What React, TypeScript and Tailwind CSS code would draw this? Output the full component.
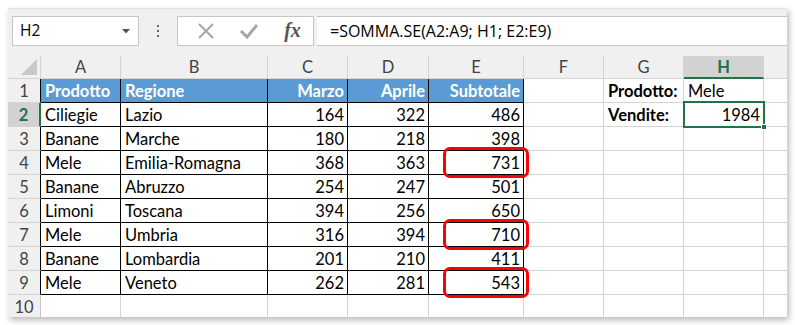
import React from "react";

const cols = ["A", "B", "C", "D", "E", "F", "G", "H"];
const data: (string | number)[][] = [
  ["Ciliegie", "Lazio", 164, 322, 486],
  ["Banane", "Marche", 180, 218, 398],
  ["Mele", "Emilia-Romagna", 368, 363, 731],
  ["Banane", "Abruzzo", 254, 247, 501],
  ["Limoni", "Toscana", 394, 256, 650],
  ["Mele", "Umbria", 316, 394, 710],
  ["Banane", "Lombardia", 201, 210, 411],
  ["Mele", "Veneto", 262, 281, 543],
];
const headers = ["Prodotto", "Regione", "Marzo", "Aprile", "Subtotale"];
const redRows = [4, 7, 9];

function Cell({
  children,
  black,
  blue,
  right,
  bold,
  extra,
  rowH,
}: {
  children?: React.ReactNode;
  black?: boolean;
  blue?: boolean;
  right?: boolean;
  bold?: boolean;
  extra?: React.ReactNode;
  rowH: string;
}) {
  return (
    <div
      className={`relative flex items-center ${rowH} border-r border-b ${
        black ? "border-black" : "border-[#d4d4d4]"
      } ${blue ? "bg-[#5b9bd5] text-white font-bold" : "bg-white text-black"} ${
        bold ? "font-bold" : ""
      } ${right ? "justify-end pr-[3px]" : "justify-start pl-[4px]"} whitespace-nowrap`}
    >
      <span className="leading-none pt-[1px]">{children}</span>
      {extra}
    </div>
  );
}

export default function App() {
  const rows: React.ReactNode[] = [];
  for (let r = 1; r <= 10; r++) {
    const rowH = "h-[24px]";
    const inTable = r <= 9;
    const selRow = r === 2;
    rows.push(
      <div
        key={`rh${r}`}
        className={`flex items-center justify-center ${rowH} border-b border-[#d4d4d4] ${
          selRow
            ? "bg-[#d2d2d2] text-[#217346] font-bold border-r-2 border-r-[#217346]"
            : inTable
            ? "bg-[#f0f0f0] text-[#444] border-r border-r-black"
            : "bg-[#f0f0f0] text-[#444] border-r border-r-[#c6c6c6]"
        }`}
      >
        <span className="leading-none pt-[1px]">{r}</span>
      </div>
    );
    for (let c = 0; c < 8; c++) {
      let content: React.ReactNode = null;
      let black = false;
      let blue = false;
      let right = false;
      let bold = false;
      let extra: React.ReactNode = null;
      if (c < 5 && inTable) {
        black = true;
        if (r === 1) {
          blue = true;
          content = headers[c];
          right = c >= 2;
        } else {
          const v = data[r - 2][c];
          content = v;
          right = typeof v === "number";
        }
        if (c === 4 && redRows.includes(r)) {
          extra = (
            <div className="absolute z-10 left-[14px] right-[-6px] top-[-4px] bottom-[-4px] border-[3px] border-[#ff0000] rounded-[7px] pointer-events-none" />
          );
        }
      }
      if (c === 6 && r === 1) {
        content = "Prodotto:";
        bold = true;
      }
      if (c === 6 && r === 2) {
        content = "Vendite:";
        bold = true;
      }
      if (c === 7 && r === 1) {
        content = "Mele";
      }
      if (c === 7 && r === 2) {
        content = 1984;
        right = true;
        extra = (
          <>
            <div className="absolute z-10 left-[-1px] right-[-2px] top-[-2px] bottom-[-2px] border-2 border-[#217346] pointer-events-none" />
            <div className="absolute z-10 right-[-4px] bottom-[-4px] w-[6px] h-[6px] bg-[#217346] border border-white pointer-events-none" />
          </>
        );
      }
      rows.push(
        <Cell
          key={`c${r}-${c}`}
          black={black}
          blue={blue}
          right={right}
          bold={bold}
          extra={extra}
          rowH={rowH}
        >
          {content}
        </Cell>
      );
    }
    rows.push(
      <div key={`tail${r}`} className={`${rowH} bg-white border-b border-[#d4d4d4]`} />
    );
  }

  return (
    <div className="w-[795px] h-[325px] bg-white pl-[8px] pt-[8px] overflow-hidden">
      <div
        className="w-[779px] h-[309px] bg-[#f0f0f0] overflow-hidden shadow-[2px_3px_6px_rgba(0,0,0,0.28)]"
        style={{ fontFamily: "Lato, 'Liberation Sans', sans-serif" }}
      >
        {/* Formula bar */}
        <div className="h-[48px] flex items-start pt-[7px] pl-[4px] border-t border-[#e2e2e2]">
          <div
            className="w-[127px] h-[30px] bg-white border border-[#c6c6c6] flex items-center justify-between pl-[7px] pr-[8px] text-[15.5px] text-black"
            style={{ fontFamily: "'Open Sans', 'Noto Sans', sans-serif" }}
          >
            <span>H2</span>
            <svg width="8" height="5" viewBox="0 0 8 5">
              <path d="M0 0 L8 0 L4 4.5 Z" fill="#555" />
            </svg>
          </div>
          <div className="w-[38px] h-[30px] flex items-center justify-center">
            <svg width="4" height="12" viewBox="0 0 4 12">
              <rect x="1" y="0" width="2" height="2" fill="#666" />
              <rect x="1" y="5" width="2" height="2" fill="#666" />
              <rect x="1" y="10" width="2" height="2" fill="#666" />
            </svg>
          </div>
          <div className="w-[137px] h-[30px] bg-white border border-[#c6c6c6] flex items-center">
            <div className="w-[48px] flex justify-center pl-[8px]">
              <svg width="18" height="18" viewBox="0 0 18 18">
                <path d="M2 2 L16 16 M16 2 L2 16" stroke="#a6a6a6" strokeWidth="2" />
              </svg>
            </div>
            <div className="w-[46px] flex justify-center">
              <svg width="20" height="18" viewBox="0 0 20 18">
                <path d="M2 9 L8 15 L18 3" stroke="#a6a6a6" strokeWidth="3" fill="none" />
              </svg>
            </div>
            <div
              className="flex-1 flex justify-center text-[20px] italic font-bold text-[#555] leading-none pb-[2px]"
              style={{ fontFamily: "'Liberation Serif', 'DejaVu Serif', serif" }}
            >
              fx
            </div>
          </div>
          <div
            className="ml-[3px] flex-1 h-[30px] bg-white border-y border-[#c6c6c6] flex items-center pl-[13px] text-[16px] text-black"
            style={{ fontFamily: "'Open Sans', 'Noto Sans', sans-serif" }}
          >
            =SOMMA.SE(A2:A9; H1; E2:E9)
          </div>
        </div>

        {/* Grid */}
        <div className="grid grid-cols-[33px_80px_147px_80px_81px_95px_80px_80px_80px_23px] text-[16.5px]">
          <div className="relative h-[23px] bg-[#f0f0f0] border-r border-b border-[#d4d4d4]">
            <svg className="absolute right-[3px] bottom-[3px]" width="16" height="16" viewBox="0 0 16 16">
              <path d="M16 0 L16 16 L0 16 Z" fill="#c8c8c8" />
            </svg>
          </div>
          {cols.map((c) => (
            <div
              key={c}
              className={`h-[23px] flex items-center justify-center border-r border-[#d4d4d4] ${
                c === "H"
                  ? "bg-[#d2d2d2] text-[#217346] font-bold border-b-2 border-b-[#217346]"
                  : "bg-[#f0f0f0] text-[#444] border-b border-b-[#d4d4d4]"
              }`}
            >
              <span className="leading-none pt-[1px]">{c}</span>
            </div>
          ))}
          <div className="h-[23px] bg-[#f0f0f0] border-b border-[#d4d4d4]" />
          {rows}
        </div>
      </div>
    </div>
  );
}
